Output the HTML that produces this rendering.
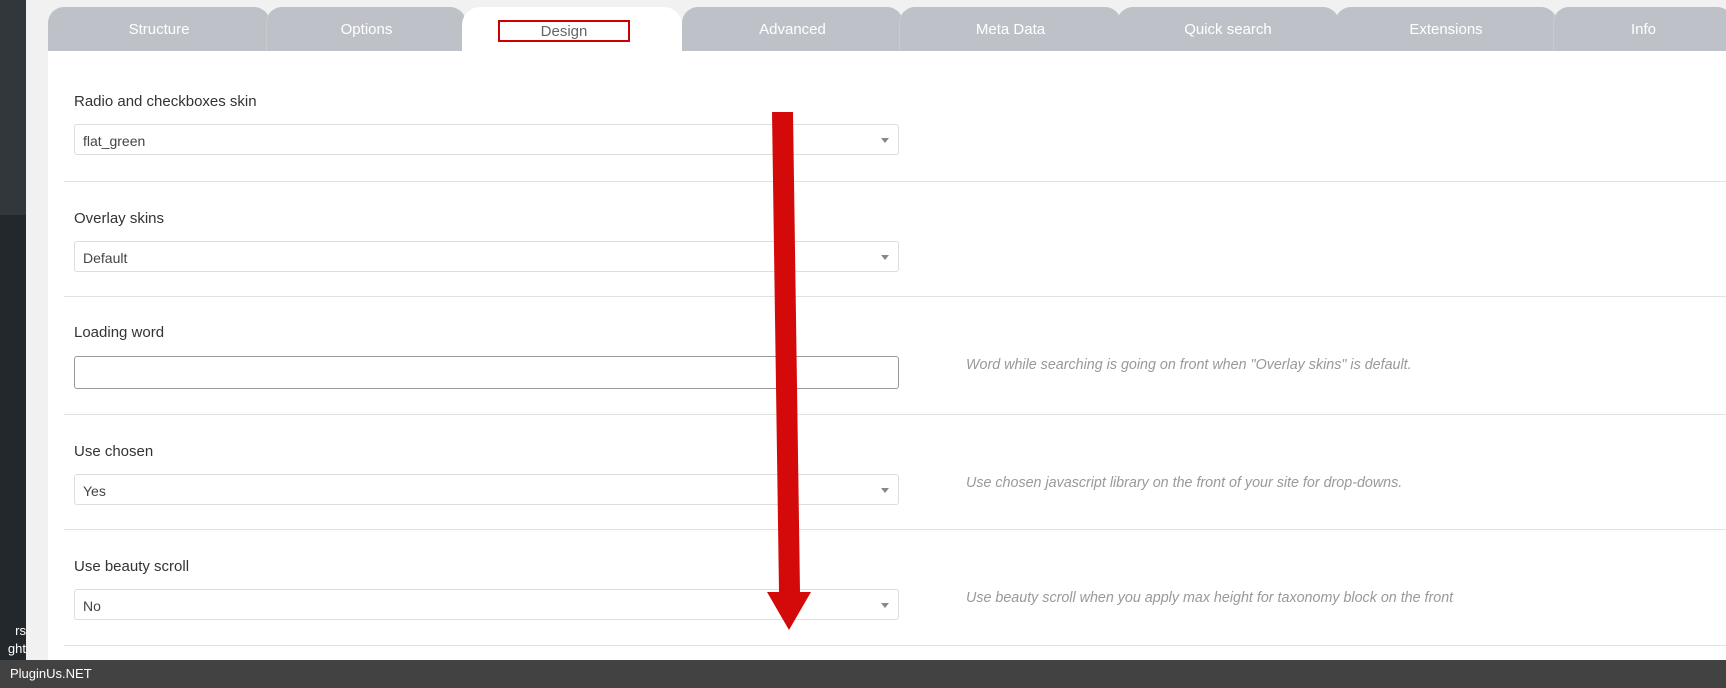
<!DOCTYPE html>
<html><head><meta charset="utf-8"><style>
*{margin:0;padding:0;box-sizing:border-box}
body{width:1726px;height:688px;position:relative;overflow:hidden;background:#f1f1f1;font-family:"Liberation Sans",sans-serif}
.abs{position:absolute}
.tab{position:absolute;top:7px;height:44px;background:#bec2c8;border-radius:16px 16px 0 0;color:#fff;font-size:15px;text-align:center;line-height:46px}
.lbl{position:absolute;left:74px;font-size:15px;color:#333}
.sel{position:absolute;left:74px;width:825px;height:31px;border:1px solid #ddd;border-radius:3px;background:#fff;font-size:14px;color:#444;line-height:33px;padding-left:8px}
.sel:after{content:"";position:absolute;right:9px;top:13px;border-left:4px solid transparent;border-right:4px solid transparent;border-top:5px solid #888}
.sep{position:absolute;left:64px;right:0;height:1px;background:#e2e2e2}
.hint{position:absolute;left:966px;font-size:14.3px;font-style:italic;color:#999}
</style></head><body>
<div class="abs" style="left:0;top:0;width:26px;height:215px;background:#32373c"></div>
<div class="abs" style="left:0;top:215px;width:26px;height:473px;background:#23282d"></div>
<div class="abs" style="left:0;top:622px;color:#fff;font-size:13px;line-height:18px;width:26px;text-align:right;overflow:hidden">rs<br>ght</div>
<div class="abs" style="left:48px;top:51px;right:0;height:609px;background:#fff"></div>
<div class="tab" style="left:48px;width:222px">Structure</div>
<div class="tab" style="left:266px;width:200px;border-left:1px solid #c8ccd1">Options</div>
<div class="tab" style="left:682px;width:221px">Advanced</div>
<div class="tab" style="left:899px;width:222px;border-left:1px solid #c8ccd1">Meta Data</div>
<div class="tab" style="left:1117px;width:222px">Quick search</div>
<div class="tab" style="left:1335px;width:222px">Extensions</div>
<div class="tab" style="left:1553px;width:180px;border-left:1px solid #c8ccd1">Info</div>
<div class="tab" style="left:462px;width:220px;background:#fff;color:#666;border-radius:18px 18px 0 0"></div>
<div class="abs" style="left:498px;top:20px;width:132px;height:22px;border:2px solid #c00;color:#666;font-size:15px;text-align:center;line-height:20px">Design</div>

<div class="lbl" style="top:93px">Radio and checkboxes skin</div>
<div class="sel" style="top:124px">flat_green</div>
<div class="sep" style="top:181px"></div>
<div class="lbl" style="top:210px">Overlay skins</div>
<div class="sel" style="top:241px">Default</div>
<div class="sep" style="top:296px"></div>
<div class="lbl" style="top:324px">Loading word</div>
<div class="abs" style="left:74px;top:356px;width:825px;height:33px;border:1px solid #999;border-radius:3px"></div>
<div class="hint" style="top:357px">Word while searching is going on front when "Overlay skins" is default.</div>
<div class="sep" style="top:414px"></div>
<div class="lbl" style="top:443px">Use chosen</div>
<div class="sel" style="top:474px">Yes</div>
<div class="hint" style="top:475px">Use chosen javascript library on the front of your site for drop-downs.</div>
<div class="sep" style="top:529px"></div>
<div class="lbl" style="top:558px">Use beauty scroll</div>
<div class="sel" style="top:589px">No</div>
<div class="hint" style="top:590px">Use beauty scroll when you apply max height for taxonomy block on the front</div>
<div class="sep" style="top:645px"></div>

<svg class="abs" style="left:0;top:0" width="1726" height="688"><polygon points="772,112 793,112 800,592 811,592 789,630 767,592 779,592" fill="#d40a0a"/></svg>

<div class="abs" style="left:0;top:660px;width:1726px;height:28px;background:#424242;color:#fff;font-size:13px;line-height:28px;padding-left:10px">PluginUs.NET</div>
</body></html>
